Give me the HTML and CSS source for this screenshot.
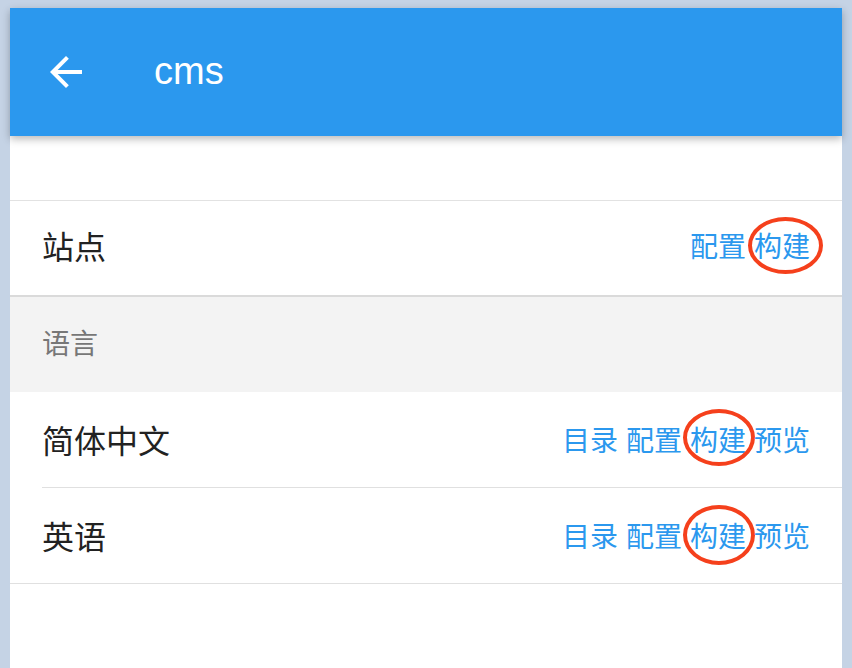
FILE: index.html
```html
<!DOCTYPE html>
<html lang="zh">
<head>
<meta charset="utf-8">
<title>cms</title>
<link rel="stylesheet" href="styles.css">
</head>
<body>
<div class="screen">
  <header class="appbar">
    <button class="back" aria-label="返回">
      <svg viewBox="0 0 24 24" width="48" height="48"><path fill="#fff" d="M20 11H7.83l5.59-5.59L12 4l-8 8 8 8 1.41-1.41L7.83 13H20v-2z"/></svg>
    </button>
    <h1 class="title">cms</h1>
  </header>
  <div class="spacer"></div>
  <div class="row row-site">
    <span class="label">站点</span>
    <span class="links"><a class="link">配置</a><a class="link marked">构建<i class="ring ring-a"></i></a></span>
  </div>
  <div class="section">语言</div>
  <div class="row row-inset">
    <span class="label">简体中文</span>
    <span class="links"><a class="link">目录</a><a class="link">配置</a><a class="link marked">构建<i class="ring ring-b"></i></a><a class="link">预览</a></span>
  </div>
  <div class="row row-last">
    <span class="label">英语</span>
    <span class="links"><a class="link">目录</a><a class="link">配置</a><a class="link marked">构建<i class="ring ring-c"></i></a><a class="link">预览</a></span>
  </div>
</div>
</body>
</html>
```
FILE: styles.css
```css
html, body {
  margin: 0;
  padding: 0;
  height: 100%;
}
body {
  background: #c5d3e5;
  padding: 8px 10px 0;
  box-sizing: border-box;
  overflow: hidden;
  font-family: "Noto Sans CJK SC", "Liberation Sans", sans-serif;
}
.screen {
  background: #fff;
  height: 100%;
  display: flex;
  flex-direction: column;
}
.appbar {
  height: 128px;
  background: #2b98ee;
  display: flex;
  align-items: center;
  padding-left: 32px;
  box-shadow: 0 3px 8px rgba(0, 0, 0, 0.28);
  position: relative;
  z-index: 1;
  flex-shrink: 0;
}
.back {
  width: 48px;
  height: 48px;
  padding: 0;
  border: 0;
  background: none;
  display: flex;
}
.title {
  margin: 0 0 0 64px;
  color: #fff;
  font-family: "Liberation Sans", Arial, sans-serif;
  font-weight: normal;
  font-size: 38px;
  line-height: 1;
  position: relative;
  top: -1px;
}
.spacer {
  height: 64px;
  border-bottom: 1px solid #e2e2e2;
  flex-shrink: 0;
}
.row {
  height: 95px;
  box-sizing: border-box;
  display: flex;
  align-items: center;
  justify-content: space-between;
  padding: 0 32px 6px;
  border-bottom: 1px solid #e0e0e0;
  flex-shrink: 0;
}
.row-site {
  height: 96px;
  border-bottom: 2px solid #dadada;
}
.row-inset {
  border-bottom: 0;
  background-image: linear-gradient(#e0e0e0, #e0e0e0);
  background-size: calc(100% - 32px) 1px;
  background-position: right bottom;
  background-repeat: no-repeat;
  height: 96px;
  padding-bottom: 2px;
}
.row-last {
  height: 96px;
  padding-bottom: 2px;
}
.label {
  font-size: 32px;
  color: #222;
  line-height: 1;
}
.links {
  display: flex;
  font-size: 28px;
  line-height: 1;
  color: #2b98ee;
}
.link {
  margin-left: 8px;
  position: relative;
}
.section {
  height: 95px;
  box-sizing: border-box;
  background: #f3f3f3;
  display: flex;
  align-items: center;
  font-size: 28px;
  color: #777;
  flex-shrink: 0;
  padding: 0 0 6px 32px;
}
.ring {
  position: absolute;
  border: 4px solid #f5401c;
  border-radius: 50%;
  box-sizing: border-box;
}
.ring-a {
  left: -6px;
  top: -14px;
  width: 75px;
  height: 57px;
}
.ring-b {
  left: -7px;
  top: -16px;
  width: 72px;
  height: 57px;
}
.ring-c {
  left: -7px;
  top: -16px;
  width: 72px;
  height: 60px;
}
```
